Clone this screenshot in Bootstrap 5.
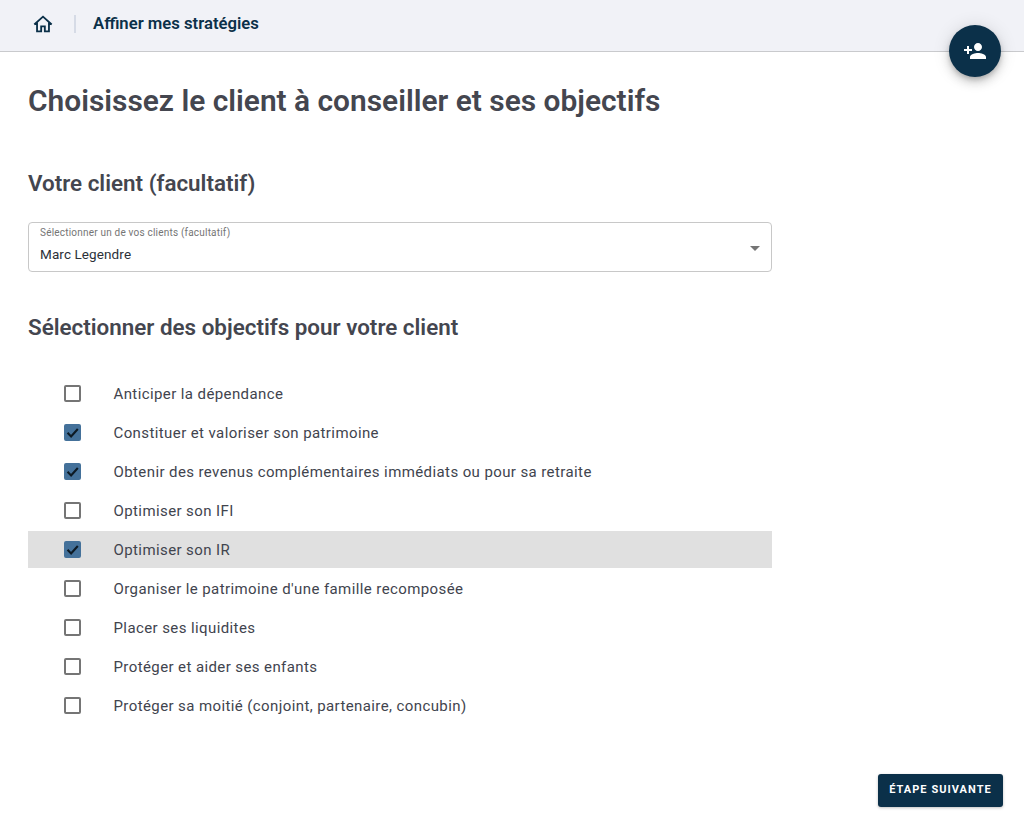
<!DOCTYPE html>
<html lang="fr">
<head>
<meta charset="utf-8">
<title>Affiner mes stratégies</title>
<link href="https://cdn.jsdelivr.net/npm/bootstrap@5.3.0/dist/css/bootstrap.min.css" rel="stylesheet">
<style>
html,body{height:821px;overflow:hidden}
body{font-family:Roboto,"Liberation Sans",sans-serif;color:#41444e;background:#fff;position:relative}
.topbar{height:52px;background:#f1f2f7;border-bottom:1px solid #c9cacd;padding-left:32px;padding-bottom:4px}
.home-ic{width:22px;height:22px;color:#0b3049;display:block}
.sep{width:2px;height:18px;background:#d6dbe6;margin:1px 17px 0 20px}
.crumb{font-size:16.7px;font-weight:600;color:#0b3049}
.fab{position:absolute;top:25px;left:949px;width:52px;height:52px;border-radius:50%;background:#0b3049;border:0;padding:0;box-shadow:0 3px 5px -1px rgba(0,0,0,.2),0 6px 10px 0 rgba(0,0,0,.14),0 1px 18px 0 rgba(0,0,0,.12)}
.fab svg{width:24px;height:24px;fill:#fff}
.wrap{padding:0 28px;width:800px}
.h-main{font-size:29.9px;font-weight:600;line-height:36px;margin:31px 0 0;color:#44464f}
.h-sub{font-size:22.4px;font-weight:600;line-height:28px;margin:0;color:#44464f}
.h-a{margin-top:50px}
.h-b{margin-top:41px}
.field{height:50px;width:744px;margin-top:25px;border:1px solid #c8c8c8;border-radius:4px;padding:4px 11px;position:relative}
.field-l{font-size:10px;line-height:12px;color:#757575;letter-spacing:.2px}
.field-v{font-size:13.5px;line-height:20px;margin-top:5px;color:#2b3038;letter-spacing:.1px}
.caret-d{position:absolute;right:11px;top:23px;width:0;height:0;border-left:5px solid transparent;border-right:5px solid transparent;border-top:5px solid #757575}
.goals{margin-top:34px;width:744px}
.goal{height:37px;margin-bottom:2px;padding-left:36px;font-size:15px;letter-spacing:.4px;color:#41444e}
.goal-t{position:relative;top:.5px}
.goal.on-hover{background:#e0e0e0}
.box{width:17px;height:17px;border:2px solid #757575;border-radius:2px;margin-right:32.5px;flex:none;display:flex;align-items:center;justify-content:center}
.box.chk{background:#44719a;border-color:#44719a}
.box svg{width:17px;height:17px;flex:none;fill:none;stroke:#0d1a24;stroke-width:3}
.next{position:absolute;left:878px;top:774px;width:125px;height:33px;background:#0b3049;color:#fff;font-size:11px;font-weight:700;letter-spacing:1.05px;border:0;border-radius:3px;padding:0;text-transform:uppercase;box-shadow:0 1px 3px rgba(0,0,0,.25)}
</style>
</head>
<body>
<header class="topbar d-flex align-items-center">
<svg class="home-ic" viewBox="0 0 24 24" fill="none" stroke="currentColor" stroke-width="2" stroke-linejoin="miter"><path d="M2.5 12.5 12 4l9.5 8.5M5.5 10.5V20H10v-5.5h4V20h4.5v-9.5"/></svg>
<span class="sep"></span>
<span class="crumb">Affiner mes stratégies</span>
</header>
<button class="fab d-flex align-items-center justify-content-center" type="button" aria-label="Ajouter un client">
<svg viewBox="0 0 24 24"><path d="M15 12c2.21 0 4-1.79 4-4s-1.79-4-4-4-4 1.79-4 4 1.79 4 4 4zm-9-2V7H4v3H1v2h3v3h2v-3h3v-2H6zm9 4c-2.67 0-8 1.34-8 4v2h16v-2c0-2.66-5.33-4-8-4z"/></svg>
</button>
<main class="wrap">
<h1 class="h-main">Choisissez le client à conseiller et ses objectifs</h1>
<h2 class="h-sub h-a">Votre client (facultatif)</h2>
<div class="field">
<div class="field-l">Sélectionner un de vos clients (facultatif)</div>
<div class="field-v">Marc Legendre</div>
<span class="caret-d"></span>
</div>
<h2 class="h-sub h-b">Sélectionner des objectifs pour votre client</h2>
<div class="goals">
<div class="goal d-flex align-items-center"><span class="box"></span><span class="goal-t">Anticiper la dépendance</span></div>
<div class="goal d-flex align-items-center"><span class="box chk"><svg viewBox="0 0 24 24"><path d="M5 12.5 10 17.5 19.5 7"/></svg></span><span class="goal-t">Constituer et valoriser son patrimoine</span></div>
<div class="goal d-flex align-items-center"><span class="box chk"><svg viewBox="0 0 24 24"><path d="M5 12.5 10 17.5 19.5 7"/></svg></span><span class="goal-t">Obtenir des revenus complémentaires immédiats ou pour sa retraite</span></div>
<div class="goal d-flex align-items-center"><span class="box"></span><span class="goal-t">Optimiser son IFI</span></div>
<div class="goal on-hover d-flex align-items-center"><span class="box chk"><svg viewBox="0 0 24 24"><path d="M5 12.5 10 17.5 19.5 7"/></svg></span><span class="goal-t">Optimiser son IR</span></div>
<div class="goal d-flex align-items-center"><span class="box"></span><span class="goal-t">Organiser le patrimoine d'une famille recomposée</span></div>
<div class="goal d-flex align-items-center"><span class="box"></span><span class="goal-t">Placer ses liquidites</span></div>
<div class="goal d-flex align-items-center"><span class="box"></span><span class="goal-t">Protéger et aider ses enfants</span></div>
<div class="goal d-flex align-items-center"><span class="box"></span><span class="goal-t">Protéger sa moitié (conjoint, partenaire, concubin)</span></div>
</div>
</main>
<button class="next" type="button">Étape suivante</button>
<script src="https://cdn.jsdelivr.net/npm/bootstrap@5.3.0/dist/js/bootstrap.bundle.min.js"></script>
</body>
</html>
